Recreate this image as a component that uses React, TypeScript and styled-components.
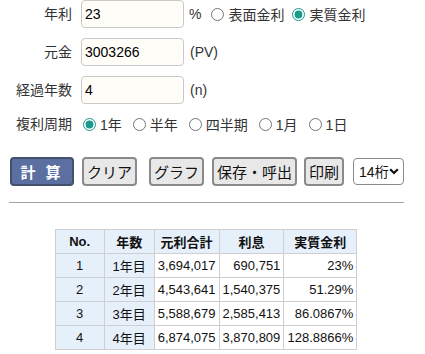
import styled, { createGlobalStyle } from 'styled-components';

const FONT = `"Liberation Sans", "Noto Sans CJK JP", sans-serif`;

const GlobalStyle = createGlobalStyle`
  body {
    margin: 0 8px;
    font-family: ${FONT};
    color: #333;
    background: #fff;
  }
`;

const Page = styled.div`
  width: 396px;
`;

const Form = styled.div`
  display: grid;
  grid-template-columns: 64px auto;
  column-gap: 9px;
  row-gap: 10px;
  align-items: center;
`;

const Label = styled.div`
  text-align: right;
  font-size: 14px;
  line-height: 20px;
  white-space: nowrap;
`;

const Field = styled.div`
  display: flex;
  align-items: center;
  font-size: 14px;
  height: ${(p: { $h?: number }) => p.$h ?? 28}px;
`;

const TextInput = styled.input`
  box-sizing: border-box;
  width: 103px;
  height: 28px;
  padding: 0 3px;
  border: 1px solid #c9c9c9;
  border-radius: 4px;
  background: #fffdf8;
  font-family: ${FONT};
  font-size: 14px;
  color: #000;
  outline: none;
`;

const Suffix = styled.span`
  margin-left: ${(p: { $gap?: number }) => p.$gap ?? 6}px;
  margin-right: 10px;
`;

const Choice = styled.label`
  display: flex;
  align-items: center;
  margin-right: ${(p: { $gap?: number }) => p.$gap ?? 8}px;
  white-space: nowrap;

  input {
    width: 13px;
    height: 13px;
    margin: 0 4px 0 0;
    accent-color: #1a9a8c;
  }
`;

const Periods = styled(Field)`
  padding-left: 2px;
`;

const Toolbar = styled.div`
  display: flex;
  align-items: center;
  margin-top: 23px;
  padding-left: 2px;
`;

const Button = styled.button<{ $gap?: number }>`
  flex-shrink: 0;
  box-sizing: border-box;
  height: 29px;
  padding: 0 3px;
  margin-right: ${(p) => p.$gap ?? 8}px;
  border: 2px solid #8a8a8a;
  border-radius: 4px;
  background: #e8e8e8;
  font-family: ${FONT};
  font-size: 15px;
  color: #111;
  white-space: nowrap;
  cursor: pointer;
`;

const CalcButton = styled(Button)`
  width: 64px;
  background: #5b6fa0;
  border-color: #45506a;
  color: #fff;
  font-weight: bold;
  letter-spacing: 3px;
`;

const SelectWrap = styled.div`
  position: relative;
  flex-shrink: 0;

  svg {
    position: absolute;
    right: 5px;
    top: 10px;
    pointer-events: none;
  }
`;

const Digits = styled.select`
  appearance: none;
  box-sizing: border-box;
  width: 51px;
  height: 27px;
  padding: 0 0 0 5px;
  border: 1px solid #8a8a8a;
  border-radius: 4px;
  background: #fff;
  font-family: ${FONT};
  font-size: 14px;
  color: #111;
`;

const Rule = styled.hr`
  margin: 16px 0 0 1px;
  border: 0;
  border-top: 1px solid #a3a3a3;
`;

const Table = styled.table`
  margin: 26px auto 0;
  border-collapse: collapse;
  font-size: 13px;
  color: #111;

  th,
  td {
    border: 1px solid #cfcfcf;
    height: 23px;
    padding: 0 3px;
    white-space: nowrap;
  }

  th {
    background: #e6f0fb;
    font-weight: bold;
    text-align: center;
  }
`;

const Cell = styled.td<{ $head?: boolean }>`
  text-align: ${(p) => (p.$head ? 'center' : 'right')};
  background: ${(p) => (p.$head ? '#e6f0fb' : '#fff')};
`;

const rows = [
  ['1', '1年目', '3,694,017', '690,751', '23%'],
  ['2', '2年目', '4,543,641', '1,540,375', '51.29%'],
  ['3', '3年目', '5,588,679', '2,585,413', '86.0867%'],
  ['4', '4年目', '6,874,075', '3,870,809', '128.8866%'],
];

const periods = ['1年', '半年', '四半期', '1月', '1日'];

export default function App() {
  return (
    <Page>
      <GlobalStyle />
      <Form>
        <Label>年利</Label>
        <Field>
          <TextInput defaultValue="23" />
          <Suffix $gap={5}>%</Suffix>
          <Choice>
            <input type="radio" name="rate" />
            表面金利
          </Choice>
          <Choice>
            <input type="radio" name="rate" defaultChecked />
            実質金利
          </Choice>
        </Field>

        <Label>元金</Label>
        <Field>
          <TextInput defaultValue="3003266" />
          <Suffix>(PV)</Suffix>
        </Field>

        <Label>経過年数</Label>
        <Field>
          <TextInput defaultValue="4" />
          <Suffix>(n)</Suffix>
        </Field>

        <Label>複利周期</Label>
        <Periods $h={20}>
          {periods.map((p, i) => (
            <Choice key={p} $gap={11}>
              <input type="radio" name="period" defaultChecked={i === 0} />
              {p}
            </Choice>
          ))}
        </Periods>
      </Form>

      <Toolbar>
        <CalcButton>計 算</CalcButton>
        <Button $gap={12}>クリア</Button>
        <Button>グラフ</Button>
        <Button $gap={7}>保存・呼出</Button>
        <Button $gap={9}>印刷</Button>
        <SelectWrap>
          <Digits defaultValue="14">
            <option value="14">14桁</option>
            <option value="10">10桁</option>
          </Digits>
          <svg width="10" height="7" viewBox="0 0 10 7">
            <path d="M1.2 1.2 L5 5 L8.8 1.2" fill="none" stroke="#111" strokeWidth="2.2" />
          </svg>
        </SelectWrap>
      </Toolbar>

      <Rule />

      <Table>
        <thead>
          <tr>
            <th style={{ width: 42 }}>No.</th>
            <th style={{ width: 43 }}>年数</th>
            <th>元利合計</th>
            <th style={{ width: 57 }}>利息</th>
            <th style={{ width: 66 }}>実質金利</th>
          </tr>
        </thead>
        <tbody>
          {rows.map((r) => (
            <tr key={r[0]}>
              <Cell $head>{r[0]}</Cell>
              <Cell $head>{r[1]}</Cell>
              <Cell>{r[2]}</Cell>
              <Cell>{r[3]}</Cell>
              <Cell>{r[4]}</Cell>
            </tr>
          ))}
        </tbody>
      </Table>
    </Page>
  );
}
